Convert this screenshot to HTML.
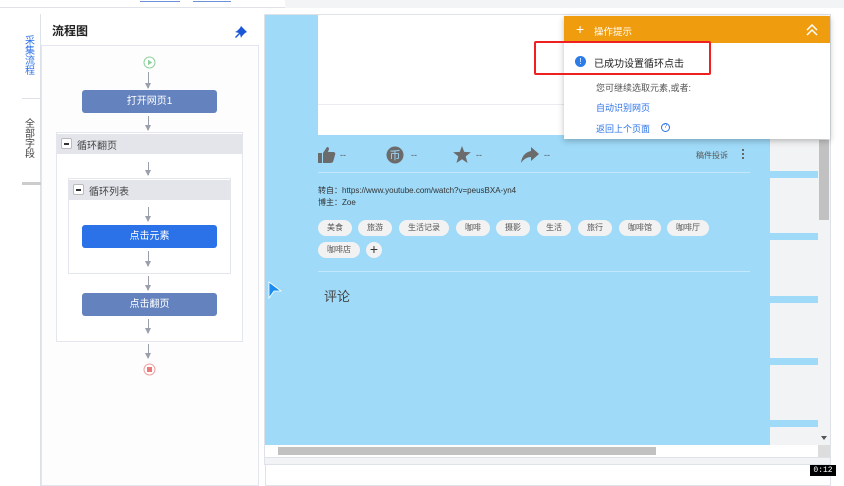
<!DOCTYPE html>
<html><head><meta charset="utf-8"><style>
*{margin:0;padding:0;box-sizing:border-box}
body{width:844px;height:486px;overflow:hidden;background:#fff;font-family:"Liberation Sans","Noto Sans CJK SC",sans-serif;position:relative}
.a{position:absolute}
.arrow{position:absolute;left:148px;width:1px;background:#9aa0ab}
.arrow:after{content:"";position:absolute;left:-3px;bottom:-1px;border-left:3.5px solid transparent;border-right:3.5px solid transparent;border-top:6px solid #9aa0ab}
.btn{position:absolute;left:82px;width:135px;height:23px;border-radius:3px;color:#fff;font-size:10px;text-align:center;line-height:23px}
.tag{position:absolute;height:16px;border-radius:8px;background:#f2f2f2;color:#555;font-size:8px;line-height:16px;text-align:center}
.bar{position:absolute;left:770px;width:48px;height:7px;background:#9fdaf8}
.vt{position:absolute;left:23px;width:14px;font-size:10px;line-height:10px;text-align:center}
</style></head><body>
<div class="a" style="left:0;top:0;width:844px;height:8px;border-bottom:1px solid #e0e2e8;background:#fff"></div>
<div class="a" style="left:140px;top:1px;width:40px;height:1px;background:#6b8fd8"></div>
<div class="a" style="left:193px;top:1px;width:38px;height:1px;background:#6b8fd8"></div>
<div class="a" style="left:285px;top:0;width:560px;height:8px;background:#f3f4f6"></div>
<!-- left tab strip -->
<div class="a" style="left:22px;top:14px;width:19px;height:472px;background:#fff;border-right:1px solid #dde2ea"></div>
<div class="vt" style="top:37px;color:#2b72e8">采<br>集<br>流<br>程</div>
<div class="a" style="left:22px;top:98px;width:19px;height:1px;background:#dde2ea"></div>
<div class="vt" style="top:120px;color:#444">全<br>部<br>字<br>段</div>
<div class="a" style="left:22px;top:182px;width:19px;height:3px;background:#ccc"></div>
<!-- flow panel -->
<div class="a" style="left:41px;top:14px;width:218px;height:472px;background:#fdfdfd;border:1px solid #e3e6ec"></div>
<div class="a" style="left:41px;top:14px;width:218px;height:32px;border-bottom:1px solid #e3e6ec;background:#fff"></div>
<div class="a" style="left:52px;top:22px;font-size:12px;color:#222;font-weight:bold">流程图</div>
<svg class="a" style="left:235px;top:26px" width="12" height="12" viewBox="0 0 12 12"><path d="M6 0L12 6L10 7L7 10L6 12L5 8L1 12L0 11L4 7L0 6L2 5L5 2Z" fill="#1a56d6"/></svg>
<svg class="a" style="left:143px;top:56px" width="13" height="13"><circle cx="6.5" cy="6.5" r="5.5" fill="#fff" stroke="#8fd19e"/><path d="M5 3.8L9.2 6.5L5 9.2Z" fill="#8fd19e"/></svg>
<div class="arrow" style="top:72px;height:16px"></div>
<div class="btn" style="top:90px;background:#6483be">打开网页1</div>
<div class="arrow" style="top:116px;height:14px"></div>
<div class="a" style="left:56px;top:132px;width:187px;height:210px;border:1px solid #e3e6ec;background:#fff"></div>
<div class="a" style="left:57px;top:134px;width:185px;height:20px;background:#e3e5ea"></div>
<div class="a" style="left:61px;top:138px;width:11px;height:11px;border:1px solid #bbb;background:#fff;border-radius:2px"><div style="position:absolute;left:2px;top:4px;width:5px;height:1.5px;background:#333"></div></div>
<div class="a" style="left:77px;top:137px;font-size:10px;color:#444">循环翻页</div>
<div class="arrow" style="top:162px;height:13px"></div>
<div class="a" style="left:68px;top:178px;width:163px;height:96px;border:1px solid #e3e6ec;background:#fff"></div>
<div class="a" style="left:69px;top:180px;width:161px;height:20px;background:#e3e5ea"></div>
<div class="a" style="left:73px;top:184px;width:11px;height:11px;border:1px solid #bbb;background:#fff;border-radius:2px"><div style="position:absolute;left:2px;top:4px;width:5px;height:1.5px;background:#333"></div></div>
<div class="a" style="left:89px;top:183px;font-size:10px;color:#444">循环列表</div>
<div class="arrow" style="top:207px;height:14px"></div>
<div class="btn" style="top:225px;background:#2b72e8">点击元素</div>
<div class="arrow" style="top:251px;height:15px"></div>
<div class="arrow" style="top:276px;height:14px"></div>
<div class="btn" style="top:293px;background:#6483be">点击翻页</div>
<div class="arrow" style="top:319px;height:14px"></div>
<div class="arrow" style="top:344px;height:14px"></div>
<svg class="a" style="left:143px;top:363px" width="13" height="13"><circle cx="6.5" cy="6.5" r="5.5" fill="#fff" stroke="#f0a0a0"/><rect x="4" y="4" width="5" height="5" fill="#e77"/></svg>
<!-- browser area -->
<div class="a" style="left:264px;top:14px;width:567px;height:451px;border:1px solid #dfe2e8;background:#f2f3f5"></div>
<div class="a" style="left:265px;top:15px;width:505px;height:430px;background:#9fdaf8"></div>
<div class="a" style="left:318px;top:15px;width:512px;height:120px;background:#fff"></div>
<div class="a" style="left:318px;top:104px;width:250px;height:1px;background:#ececf0"></div>
<div class="a" style="left:770px;top:135px;width:48px;height:310px;background:#f2f3f5"></div>
<div class="bar" style="top:171px"></div><div class="bar" style="top:233px"></div><div class="bar" style="top:296px"></div><div class="bar" style="top:358px"></div><div class="bar" style="top:420px"></div>
<div class="a" style="left:819px;top:140px;width:10px;height:80px;background:#c1c1c1"></div>
<div class="a" style="left:821px;top:436px;border-left:3px solid transparent;border-right:3px solid transparent;border-top:4px solid #555"></div>
<div class="a" style="left:265px;top:445px;width:565px;height:12px;background:#fff"></div>
<div class="a" style="left:278px;top:447px;width:378px;height:8px;background:#c1c1c1"></div>
<div class="a" style="left:818px;top:445px;width:12px;height:12px;background:#ddd"></div>
<div class="a" style="left:265px;top:457px;width:566px;height:1px;background:#dfe2e8"></div>
<div class="a" style="left:265px;top:464px;width:566px;height:22px;border:1px solid #dfe2e8;background:#fff"></div>
<div class="a" style="left:810px;top:465px;width:26px;height:11px;background:#000;color:#fff;font-size:8px;line-height:11px;text-align:center;font-family:'Liberation Mono',monospace">0:12</div>
<!-- cursor -->
<svg class="a" style="left:268px;top:281px" width="14" height="18"><path d="M1 1L13 10L6 10L1 17Z" fill="#1a8cf0" stroke="#fff" stroke-width="0.8"/></svg>
<!-- action icons -->
<svg class="a" style="left:318px;top:147px" width="18" height="16" viewBox="0 0 18 16"><rect x="0" y="6" width="4" height="10" fill="#6b6b6b"/><path d="M5 6L9 0Q11 0 11 2L10 5L16 5Q18 6 17 8L15 15Q14 16 12 16L5 16Z" fill="#6b6b6b"/></svg>
<div class="a" style="left:340px;top:150px;font-size:9px;color:#555">--</div>
<svg class="a" style="left:386px;top:146px" width="18" height="18"><circle cx="9" cy="9" r="8.5" fill="#6b6b6b"/><text x="9" y="13" font-size="11" fill="#9fdaf8" text-anchor="middle" font-family="Noto Sans CJK SC">币</text></svg>
<div class="a" style="left:411px;top:150px;font-size:9px;color:#555">--</div>
<svg class="a" style="left:453px;top:146px" width="18" height="17" viewBox="0 0 24 23"><path d="M12 0L15 8L24 8.5L17 14L19.5 23L12 18L4.5 23L7 14L0 8.5L9 8Z" fill="#6b6b6b"/></svg>
<div class="a" style="left:476px;top:150px;font-size:9px;color:#555">--</div>
<svg class="a" style="left:521px;top:147px" width="18" height="16" viewBox="0 0 18 16"><path d="M10 0L18 7L10 14L10 10Q4 10 0 16Q1 6 10 4Z" fill="#6b6b6b"/></svg>
<div class="a" style="left:544px;top:150px;font-size:9px;color:#555">--</div>
<div class="a" style="left:696px;top:150px;font-size:8px;color:#555">稿件投诉</div>
<div class="a" style="left:742px;top:149px;width:2px;height:10px;border-left:2px dotted #666"></div>
<div class="a" style="left:318px;top:172px;width:432px;height:1px;background:#c4e8fb"></div>
<div class="a" style="left:318px;top:185px;font-size:8px;color:#333;line-height:12px">转自：https://www.youtube.com/watch?v=peusBXA-yn4<br>博主：Zoe</div>
<div class="tag" style="left:318px;top:220px;width:34px">美食</div>
<div class="tag" style="left:358px;top:220px;width:34px">旅游</div>
<div class="tag" style="left:399px;top:220px;width:50px">生活记录</div>
<div class="tag" style="left:456px;top:220px;width:34px">咖啡</div>
<div class="tag" style="left:496px;top:220px;width:34px">摄影</div>
<div class="tag" style="left:537px;top:220px;width:34px">生活</div>
<div class="tag" style="left:578px;top:220px;width:34px">旅行</div>
<div class="tag" style="left:619px;top:220px;width:42px">咖啡馆</div>
<div class="tag" style="left:667px;top:220px;width:42px">咖啡厅</div>
<div class="tag" style="left:318px;top:242px;width:42px">咖啡店</div>
<div class="a" style="left:366px;top:242px;width:16px;height:16px;border-radius:8px;background:#f2f2f2;color:#333;font-size:14px;line-height:15px;text-align:center">+</div>
<div class="a" style="left:318px;top:271px;width:432px;height:1px;background:#c4e8fb"></div>
<div class="a" style="left:324px;top:286px;font-size:13px;color:#444">评论</div>
<!-- popup -->
<div class="a" style="left:564px;top:16px;width:266px;height:123px;background:#fff;box-shadow:0 2px 6px rgba(0,0,0,.25)"></div>
<div class="a" style="left:564px;top:16px;width:266px;height:27px;background:#f09c0f"></div>
<div class="a" style="left:576px;top:22px;color:#fff;font-size:14px;line-height:14px">+</div>
<div class="a" style="left:594px;top:24px;color:#fff;font-size:9.5px">操作提示</div>
<svg class="a" style="left:806px;top:24px" width="12" height="12"><path d="M1 6L6 1L11 6M1 11L6 6L11 11" fill="none" stroke="#fff" stroke-width="1.5"/></svg>
<div class="a" style="left:534px;top:41px;width:177px;height:34px;border:2px solid #f02020;border-radius:2px"></div>
<div class="a" style="left:575px;top:56px;width:11px;height:11px;border-radius:50%;background:#2b7be8;color:#fff;font-size:8px;line-height:11px;text-align:center">!</div>
<div class="a" style="left:594px;top:55px;font-size:10px;color:#222">已成功设置循环点击</div>
<div class="a" style="left:596px;top:81px;font-size:9px;color:#555">您可继续选取元素,或者:</div>
<div class="a" style="left:596px;top:101px;font-size:9px;color:#2b72e8">自动识别网页</div>
<div class="a" style="left:596px;top:122px;font-size:9px;color:#2b72e8">返回上个页面</div>
<div class="a" style="left:661px;top:123px;width:9px;height:9px;border:1px solid #2b72e8;border-radius:50%;color:#2b72e8;font-size:6px;line-height:7px;text-align:center">?</div>
</body></html>
